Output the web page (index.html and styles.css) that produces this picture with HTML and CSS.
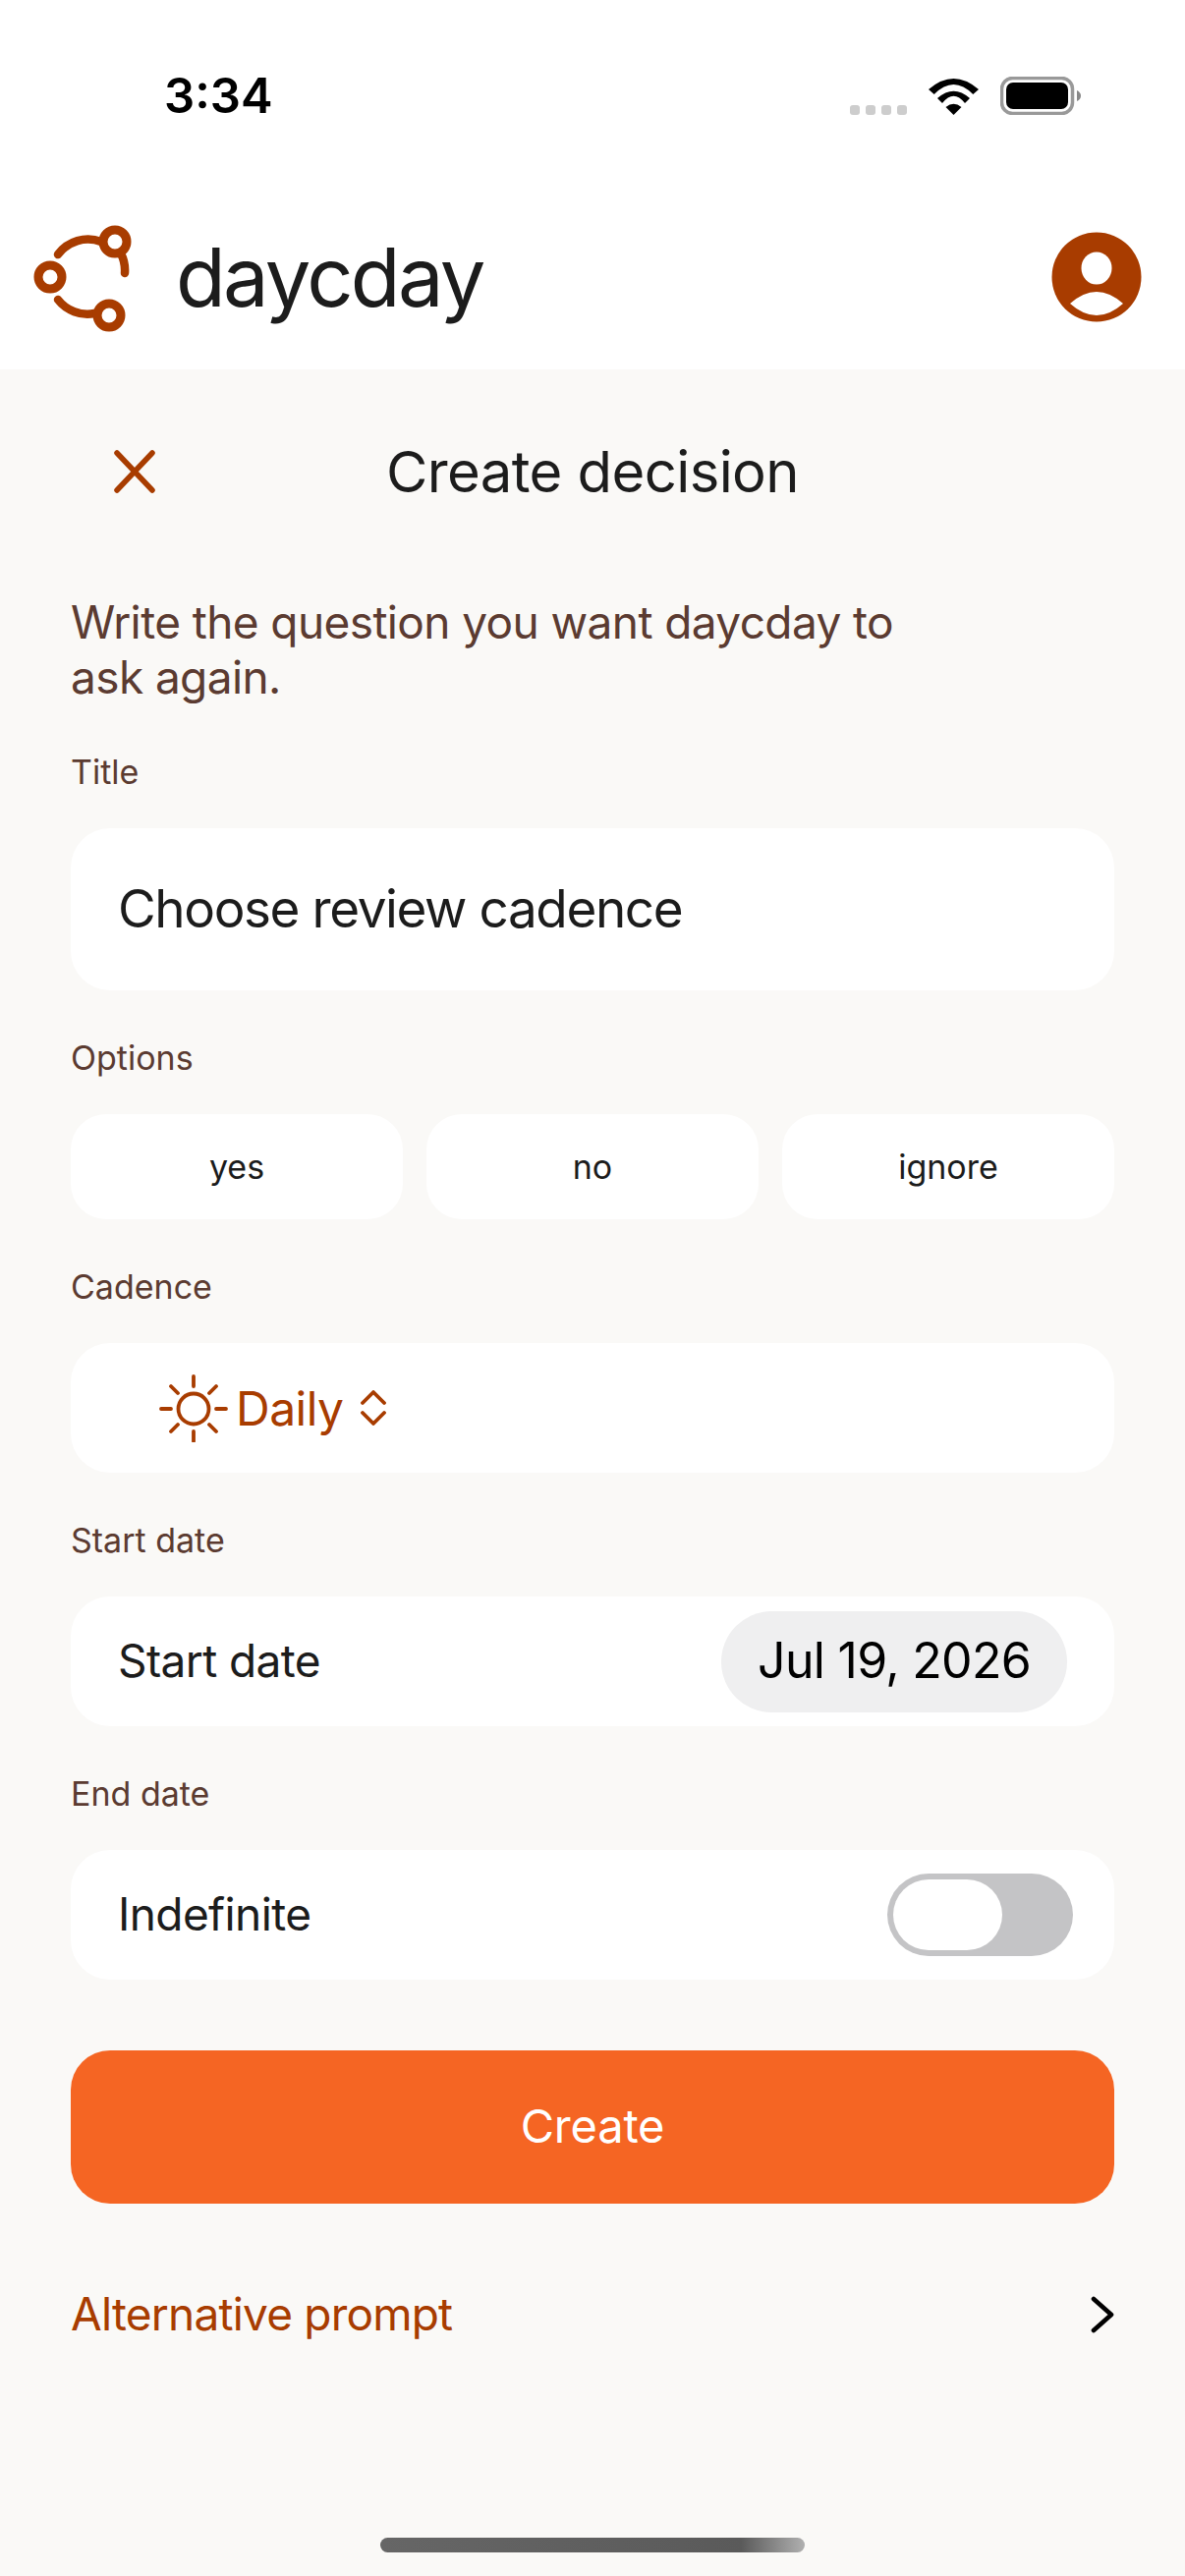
FILE: index.html
```html
<!DOCTYPE html>
<html lang="en">
<head>
    <meta charset="UTF-8">
    <meta name="viewport" content="width=device-width, initial-scale=1.0">
    <title>Create decision</title>
    <link rel="stylesheet" href="styles.css">
</head>
<body>
    <div class="top">
        <div class="status-bar">
            <span class="time">3:34</span>
            <div class="status-icons">
                <svg width="58" height="10" viewBox="0 0 58 10" fill="#cdcdcd">
                    <rect x="0" width="10" height="10" rx="3"/>
                    <rect x="16" width="10" height="10" rx="3"/>
                    <rect x="32" width="10" height="10" rx="3"/>
                    <rect x="48" width="10" height="10" rx="3"/>
                </svg>
                <svg width="51" height="37" viewBox="0 0 51 37" fill="#000">
                    <path d="M0 11Q25.5-11 51 11L45.3 16Q25.5-4 5.7 16Z"/>
                    <path d="M9 20Q25.5 5.4 42 20L37 25Q25.5 10.4 14 25Z"/>
                    <path d="M25.5 37L17.5 29Q25.5 22.5 33.5 29Z"/>
                </svg>
                <svg width="82" height="39" viewBox="0 0 82 39">
                    <rect x="1.5" y="1.5" width="72" height="36" rx="11" fill="none" stroke="#999" stroke-width="3.5"/>
                    <rect x="6" y="6" width="63" height="27" rx="7" fill="#000"/>
                    <path d="M78 14Q82 16 82 19.5Q82 23 78 25Z" fill="#888"/>
                </svg>
            </div>
        </div>
        <header class="app-bar">
            <svg class="logo" width="104" height="116" viewBox="30 224 104 116" fill="none" stroke="#a83c00" stroke-width="8.5" stroke-linecap="round">
                <path d="M59 259A38 38 0 0 1 103 246"/>
                <path d="M123 258A38 38 0 0 1 127 278"/>
                <path d="M59 305A38 38 0 0 0 96 319"/>
                <g stroke-width="9">
                    <circle cx="117" cy="246" r="12"/>
                    <circle cx="51" cy="282" r="12"/>
                    <circle cx="111" cy="321" r="12"/>
                </g>
            </svg>
            <span class="brand">daycday</span>
            <svg class="avatar" width="92" height="92" viewBox="0 0 92 92">
                <circle cx="46" cy="46" r="45.5" fill="#a83c00"/>
                <ellipse cx="46" cy="37" rx="15.5" ry="16.5" fill="#fff"/>
                <path d="M19 73Q46 49 73 73Q46 97 19 73Z" fill="#fff"/>
            </svg>
        </header>
    </div>

    <main class="sheet">
        <div class="sheet-head">
            <svg class="close-icon" width="44" height="44" viewBox="0 0 44 44" fill="none" stroke="#a83c00" stroke-width="5.5" stroke-linecap="round">
                <path d="M4 3L40 41M40 3L4 41"/>
            </svg>
            <h1>Create decision</h1>
        </div>

        <p class="intro">Write the question you want daycday to ask again.</p>

        <form class="decision-form">
            <div class="field">
                <label class="field-label">Title</label>
                <div class="card title-card">Choose review cadence</div>
            </div>

            <div class="field">
                <label class="field-label">Options</label>
                <div class="options">
                    <div class="option">yes</div>
                    <div class="option">no</div>
                    <div class="option">ignore</div>
                </div>
            </div>

            <div class="field">
                <label class="field-label">Cadence</label>
                <div class="card row cadence">
                    <svg width="70" height="70" viewBox="0 -1 70 70" fill="none" stroke="#a83c00" stroke-width="3.8" stroke-linecap="round">
                        <circle cx="35" cy="35" r="15.5"/>
                        <path d="M35 2V12M35 58V68M2 35H12M58 35H68M12 12L19 19M51 51L58 58M12 58L19 51M51 19L58 12"/>
                    </svg>
                    <span class="cadence-value">Daily</span>
                    <svg class="updown" width="26" height="36" viewBox="0 0 26 36" fill="none" stroke="#a83c00" stroke-width="3.8" stroke-linecap="round" stroke-linejoin="round">
                        <path d="M2 13L13 2L24 13M2 23L13 34L24 23"/>
                    </svg>
                </div>
            </div>

            <div class="field">
                <label class="field-label">Start date</label>
                <div class="card row spaced">
                    <span class="row-label">Start date</span>
                    <span class="date-pill">Jul 19, 2026</span>
                </div>
            </div>

            <div class="field">
                <label class="field-label">End date</label>
                <div class="card row spaced">
                    <span class="row-label">Indefinite</span>
                    <span class="toggle"><span class="knob"></span></span>
                </div>
            </div>

            <button type="button" class="create-btn">Create</button>
        </form>

        <div class="alt-row">
            <span class="row-label">Alternative prompt</span>
            <svg width="24" height="38" viewBox="0 0 24 38" fill="none" stroke="#000" stroke-width="4.6" stroke-linecap="round" stroke-linejoin="round">
                <path d="M3 3L21 19L3 35"/>
            </svg>
        </div>
    </main>

    <div class="home-bar"></div>
</body>
</html>
```

FILE: styles.css
```css
* {
    box-sizing: border-box;
}
html, body {
    height: 100%;
}
body {
    margin: 0;
    position: relative;
    overflow: hidden;
    font-family: Inter, "Liberation Sans", sans-serif;
    background-color: #faf9f7;
    color: #1c1c1c;
}
.top {
    background: #ffffff;
}
.status-bar {
    height: 188px;
    display: flex;
    justify-content: space-between;
    align-items: flex-start;
    padding: 68px 106px 0 167px;
}
.time {
    font-size: 49px;
    line-height: 60px;
    font-weight: 600;
    color: #000;
}
.status-icons {
    display: flex;
    align-items: flex-end;
    gap: 22px;
    margin-top: 10px;
}
.app-bar {
    height: 188px;
    display: flex;
    align-items: center;
    padding: 0 44px 0 30px;
}
.logo {
    margin-right: 45px;
}
.brand {
    flex: 1;
    font-size: 83px;
    letter-spacing: -2.7px;
}
.sheet {
    padding: 0 72px;
}
.sheet-head {
    position: relative;
    height: 208px;
    display: flex;
    align-items: center;
    justify-content: center;
}
.sheet-head h1 {
    margin: 0;
    font-size: 58px;
    font-weight: 400;
    letter-spacing: -0.6px;
}
.close-icon {
    position: absolute;
    left: 43px;
    top: 82px;
}
.intro {
    margin: 21px 0 48px;
    max-width: 860px;
    font-size: 46px;
    line-height: 56px;
    letter-spacing: -0.6px;
    color: #5b3b31;
}
.decision-form {
    display: flex;
    flex-direction: column;
    gap: 48px;
}
.field {
    display: flex;
    flex-direction: column;
    gap: 36px;
}
.field-label {
    font-size: 34px;
    line-height: 42px;
    color: #5b3b31;
}
.card {
    background: #ffffff;
    border-radius: 40px;
    padding: 0 48px;
    font-size: 46px;
    letter-spacing: -0.6px;
}
.title-card {
    height: 165px;
    line-height: 165px;
    font-size: 53px;
    letter-spacing: -1.4px;
}
.options {
    display: grid;
    grid-template-columns: repeat(3, 1fr);
    gap: 24px;
}
.option {
    height: 107px;
    line-height: 107px;
    text-align: center;
    background: #ffffff;
    border-radius: 36px;
    font-size: 34px;
}
.row {
    height: 132px;
    display: flex;
    align-items: center;
}
.row-label {
    padding-bottom: 2px;
}
.spaced {
    justify-content: space-between;
}
.cadence {
    padding-left: 90px;
    color: #a83c00;
}
.cadence-value {
    font-size: 48px;
    letter-spacing: -0.5px;
    margin-left: 8px;
}
.updown {
    margin-left: 17px;
}
.date-pill {
    height: 103px;
    line-height: 101px;
    padding: 0 37px;
    border-radius: 52px;
    background: #efeff0;
    font-size: 50px;
    letter-spacing: -0.7px;
    color: #000;
}
.toggle {
    width: 189px;
    height: 84px;
    margin-right: -6px;
    padding: 6px;
    border-radius: 42px;
    background: #c4c4c6;
}
.knob {
    display: block;
    width: 111px;
    height: 72px;
    border-radius: 36px;
    background: #ffffff;
}
.create-btn {
    height: 156px;
    margin-top: 24px;
    padding-bottom: 4px;
    border: none;
    border-radius: 40px;
    background: #f56523;
    color: #ffffff;
    font-family: inherit;
    font-size: 47px;
    letter-spacing: -0.2px;
}
.alt-row {
    margin-top: 76px;
    display: flex;
    justify-content: space-between;
    align-items: center;
    font-size: 46px;
    line-height: 72px;
    letter-spacing: -0.8px;
    color: #a83c00;
}
.home-bar {
    position: absolute;
    left: 387px;
    top: 2583px;
    width: 432px;
    height: 15px;
    border-radius: 8px;
    background: linear-gradient(90deg, #666 0%, #5a5a5a 85%, #b0b0b0 100%);
}
```
